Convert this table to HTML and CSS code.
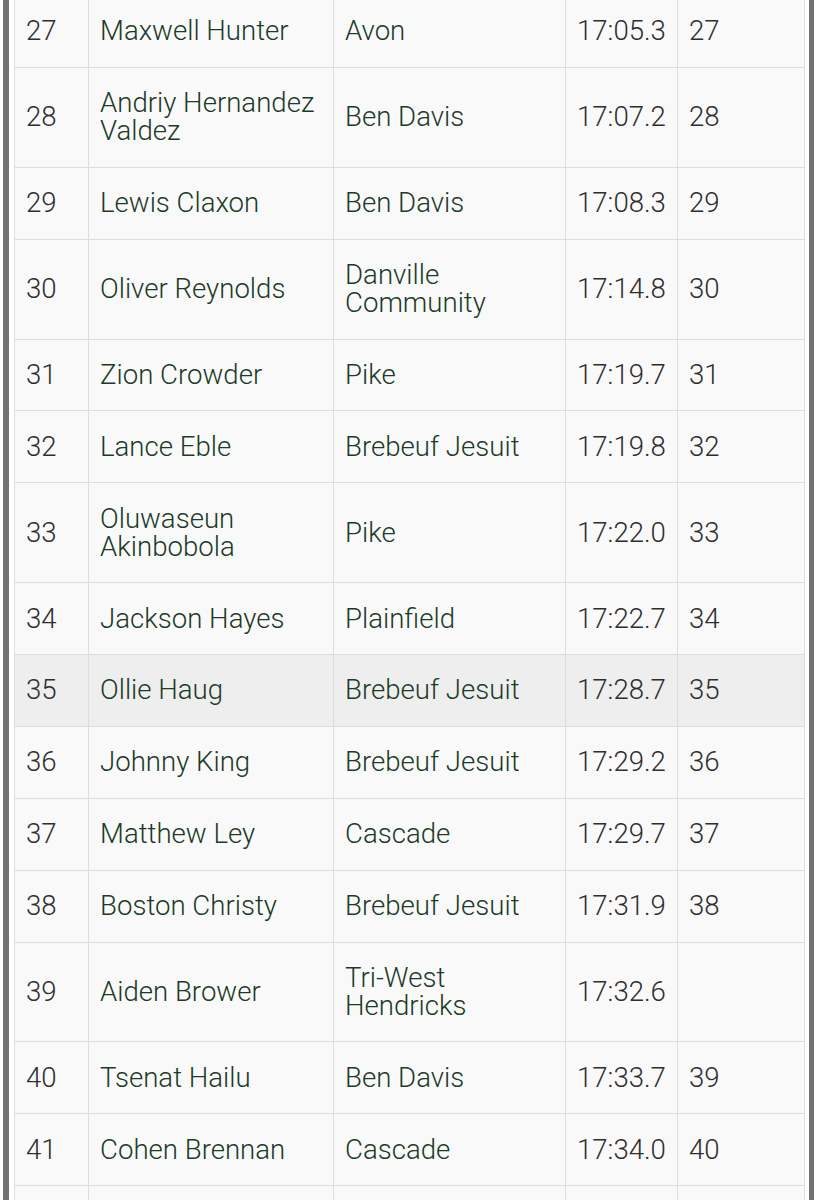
FILE: index.html
```html
<!DOCTYPE html>
<html>
<head>
<meta charset="utf-8">
<link rel="stylesheet" href="styles.css">
</head>
<body>
<div class="frame">
  <table class="results">
    <colgroup>
      <col class="c-place"><col class="c-name"><col class="c-school"><col class="c-time"><col class="c-team">
    </colgroup>
    <tbody>
      <tr><td class="num">27</td><td class="txt">Maxwell Hunter</td><td class="txt">Avon</td><td class="num">17:05.3</td><td class="num">27</td></tr>
      <tr><td class="num">28</td><td class="txt">Andriy Hernandez Valdez</td><td class="txt">Ben Davis</td><td class="num">17:07.2</td><td class="num">28</td></tr>
      <tr><td class="num">29</td><td class="txt">Lewis Claxon</td><td class="txt">Ben Davis</td><td class="num">17:08.3</td><td class="num">29</td></tr>
      <tr><td class="num">30</td><td class="txt">Oliver Reynolds</td><td class="txt">Danville Community</td><td class="num">17:14.8</td><td class="num">30</td></tr>
      <tr><td class="num">31</td><td class="txt">Zion Crowder</td><td class="txt">Pike</td><td class="num">17:19.7</td><td class="num">31</td></tr>
      <tr><td class="num">32</td><td class="txt">Lance Eble</td><td class="txt">Brebeuf Jesuit</td><td class="num">17:19.8</td><td class="num">32</td></tr>
      <tr><td class="num">33</td><td class="txt">Oluwaseun Akinbobola</td><td class="txt">Pike</td><td class="num">17:22.0</td><td class="num">33</td></tr>
      <tr><td class="num">34</td><td class="txt">Jackson Hayes</td><td class="txt">Plainfield</td><td class="num">17:22.7</td><td class="num">34</td></tr>
      <tr class="hover"><td class="num">35</td><td class="txt">Ollie Haug</td><td class="txt">Brebeuf Jesuit</td><td class="num">17:28.7</td><td class="num">35</td></tr>
      <tr><td class="num">36</td><td class="txt">Johnny King</td><td class="txt">Brebeuf Jesuit</td><td class="num">17:29.2</td><td class="num">36</td></tr>
      <tr><td class="num">37</td><td class="txt">Matthew Ley</td><td class="txt">Cascade</td><td class="num">17:29.7</td><td class="num">37</td></tr>
      <tr><td class="num">38</td><td class="txt">Boston Christy</td><td class="txt">Brebeuf Jesuit</td><td class="num">17:31.9</td><td class="num">38</td></tr>
      <tr><td class="num">39</td><td class="txt">Aiden Brower</td><td class="txt">Tri-West Hendricks</td><td class="num">17:32.6</td><td class="num"></td></tr>
      <tr><td class="num">40</td><td class="txt">Tsenat Hailu</td><td class="txt">Ben Davis</td><td class="num">17:33.7</td><td class="num">39</td></tr>
      <tr><td class="num">41</td><td class="txt">Cohen Brennan</td><td class="txt">Cascade</td><td class="num">17:34.0</td><td class="num">40</td></tr>
      <tr class="next"><td class="num"></td><td class="txt"></td><td class="txt"></td><td class="num"></td><td class="num"></td></tr>
    </tbody>
  </table>
</div>
</body>
</html>
```
FILE: styles.css
```css
html, body {
  margin: 0;
  padding: 0;
  background: #ffffff;
  overflow: hidden;
}
body {
  font-family: Roboto, "Liberation Sans", sans-serif;
}
.frame {
  margin: -5px 0 0 3px;
  width: 790px;
  padding: 0 5px;
  border-left: 6px solid #727272;
  border-right: 5px solid #727272;
}
.results {
  width: 790px;
  table-layout: fixed;
  border-collapse: collapse;
  background: #f9f9f9;
}
.c-place { width: 74px; }
.c-name { width: 245px; }
.c-school { width: 232px; }
.c-time { width: 112px; }
.c-team { width: 127px; }
.results td {
  border: 1px solid #dddddd;
  padding: 21.45px 11px 21.45px 11px;
  font-size: 27.6px;
  font-weight: 300;
  line-height: 28px;
  vertical-align: middle;
}
.results td.num { color: #2e2e2e; }
.results td.txt { color: #1c3a27; }
.results tr.hover td { background: #eeeeee; }
.results tr.next td { height: 28px; }
```
